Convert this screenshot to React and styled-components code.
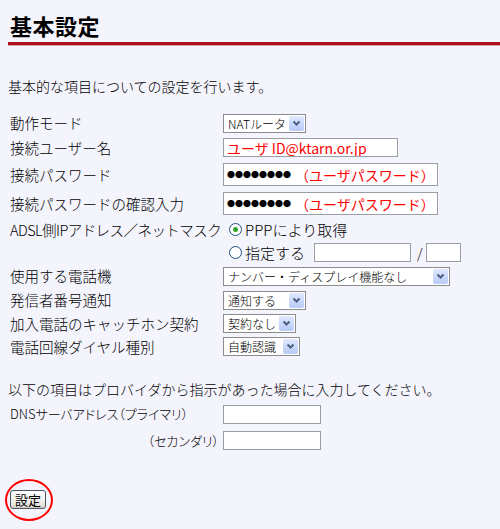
import React from "react";
import styled, { createGlobalStyle } from "styled-components";

const GlobalStyle = createGlobalStyle`
  html, body { margin: 0; padding: 0; }
  body {
    background: #f4f4fc;
    font-family: "Noto Sans CJK JP", "Noto Sans", sans-serif;
    font-weight: 300;
    color: #000;
    width: 500px;
    height: 529px;
    overflow: hidden;
  }
`;

const Page = styled.div`
  padding: 0 0 0 8px;
`;

const Title = styled.h1`
  margin: 0;
  padding: 12px 0 3px 2px;
  font-size: 22px;
  line-height: 27px;
  font-weight: bold;
  letter-spacing: 0.5px;
  border-bottom: 3px solid #a8101e;
  box-shadow: 0 1px 0 #d9a0a8;
`;

const Intro = styled.p`
  margin: 31px 0 15px 0;
  font-size: 14px;
  line-height: 20px;
`;

const Form = styled.div`
  display: flex;
  flex-direction: column;
  padding-left: 2px;
`;

const Row = styled.div`
  display: grid;
  grid-template-columns: 213px auto;
  align-items: center;
  height: ${(p) => p.$h}px;
`;

const Label = styled.div`
  font-size: ${(p) => (p.$small ? 13 : 14.5)}px;
  font-feature-settings: ${(p) => (p.$small ? '"palt"' : "normal")};
  letter-spacing: ${(p) => (p.$tight ? -0.55 : 0)}px;
  line-height: 20px;
  white-space: nowrap;
  text-align: ${(p) => (p.$right ? "right" : "left")};
  padding-right: ${(p) => (p.$right ? 4 : 0)}px;
`;

const Control = styled.div`
  display: flex;
  align-items: center;
`;

const SelectBox = styled.div`
  display: inline-flex;
  align-items: center;
  justify-content: space-between;
  box-sizing: border-box;
  width: ${(p) => p.$w}px;
  height: 19px;
  border: 1px solid #8c8c8c;
  background: #fff;
  font-size: 12px;
  font-weight: 300;
  padding-left: 4px;
  white-space: nowrap;
`;

const Arrow = styled.span`
  display: flex;
  align-items: center;
  justify-content: center;
  width: 15px;
  height: 15px;
  margin-right: 1px;
  border-radius: 2px;
  background: linear-gradient(#dfe8fe, #b7cbf7);
  box-sizing: border-box;
`;

const TextBox = styled.div`
  box-sizing: border-box;
  width: ${(p) => p.$w}px;
  height: ${(p) => p.$h}px;
  border: 1px solid #9a9ea6;
  background: #fff;
  display: flex;
  align-items: center;
  padding-left: 3px;
  color: #ff0000;
  font-size: ${(p) => p.$fs || 14}px;
  font-weight: 400;
  white-space: nowrap;
  overflow: hidden;
`;

const Dots = styled.span`
  color: #000;
  font-size: 8px;
  margin-right: 4px;
`;

const Radio = styled.span`
  display: inline-flex;
  align-items: center;
  justify-content: center;
  width: 11px;
  height: 11px;
  border: 1px solid #1c5180;
  border-radius: 50%;
  background: #fff;
  margin: 0 3px 0 6px;
  &::after {
    content: "";
    display: ${(p) => (p.$checked ? "block" : "none")};
    width: 5px;
    height: 5px;
    border-radius: 50%;
    background: #31a52c;
  }
`;

const RadioText = styled.span`
  font-size: 15px;
  line-height: 20px;
  margin-right: ${(p) => p.$mr || 0}px;
`;

const Slash = styled.span`
  font-size: 14px;
  margin: 0 3px 0 6px;
`;

const Note = styled.p`
  margin: 21px 0 2px 0;
  font-size: 14px;
  line-height: 20px;
`;

const SubmitWrap = styled.div`
  margin-top: 23px;
  position: relative;
  width: 50px;
  height: 44px;
  display: flex;
  align-items: center;
  padding-left: 2px;
`;

const Ring = styled.span`
  position: absolute;
  left: -3px;
  top: 2px;
  width: 48px;
  height: 42px;
  border: 2px solid #f00;
  border-radius: 50%;
  box-sizing: border-box;
  pointer-events: none;
`;

const Button = styled.button`
  font-family: "Noto Sans CJK JP", sans-serif;
  font-size: 13px;
  line-height: 15px;
  padding: 1px 4px;
  height: 19px;
  border: 1px solid #4a5460;
  border-radius: 3px;
  background: linear-gradient(#ffffff, #ecebe6 70%, #d6d0c5);
  color: #000;
`;

const Chevron = () => (
  <svg width="9" height="7" viewBox="0 0 9 7">
    <path d="M1.5 1.5 L4.5 4.5 L7.5 1.5" fill="none" stroke="#4d6185" strokeWidth="2" />
  </svg>
);

const Select = ({ w, children }) => (
  <SelectBox $w={w}>
    <span>{children}</span>
    <Arrow>
      <Chevron />
    </Arrow>
  </SelectBox>
);

export default function App() {
  return (
    <>
      <GlobalStyle />
      <Page>
        <Title>基本設定</Title>
        <Intro>基本的な項目についての設定を行います。</Intro>
        <Form>
          <Row $h={24}>
            <Label>動作モード</Label>
            <Control>
              <Select w={83}>NATルータ</Select>
            </Control>
          </Row>
          <Row $h={25}>
            <Label>接続ユーザー名</Label>
            <Control>
              <TextBox $w={175} $h={19} $fs={14}>ユーザ ID@ktarn.or.jp</TextBox>
            </Control>
          </Row>
          <Row $h={29}>
            <Label>接続パスワード</Label>
            <Control>
              <TextBox $w={215} $h={23}>
                <Dots>●●●●●●●●</Dots>（ユーザパスワード）
              </TextBox>
            </Control>
          </Row>
          <Row $h={29}>
            <Label>接続パスワードの確認入力</Label>
            <Control>
              <TextBox $w={215} $h={23}>
                <Dots>●●●●●●●●</Dots>（ユーザパスワード）
              </TextBox>
            </Control>
          </Row>
          <Row $h={23}>
            <Label $tight>ADSL側IPアドレス／ネットマスク</Label>
            <Control>
              <Radio $checked />
              <RadioText>PPPにより取得</RadioText>
            </Control>
          </Row>
          <Row $h={23}>
            <Label />
            <Control>
              <Radio />
              <RadioText $mr={9}>指定する</RadioText>
              <TextBox $w={97} $h={19} />
              <Slash>/</Slash>
              <TextBox $w={35} $h={19} />
            </Control>
          </Row>
          <Row $h={24}>
            <Label>使用する電話機</Label>
            <Control>
              <Select w={227}>ナンバー・ディスプレイ機能なし</Select>
            </Control>
          </Row>
          <Row $h={24}>
            <Label>発信者番号通知</Label>
            <Control>
              <Select w={83}>通知する</Select>
            </Control>
          </Row>
          <Row $h={23}>
            <Label>加入電話のキャッチホン契約</Label>
            <Control>
              <Select w={73}>契約なし</Select>
            </Control>
          </Row>
          <Row $h={23}>
            <Label>電話回線ダイヤル種別</Label>
            <Control>
              <Select w={77}>自動認識</Select>
            </Control>
          </Row>
        </Form>
        <Note>以下の項目はプロバイダから指示があった場合に入力してください。</Note>
        <Form>
          <Row $h={26}>
            <Label $small>DNSサーバアドレス（プライマリ）</Label>
            <Control>
              <TextBox $w={98} $h={19} />
            </Control>
          </Row>
          <Row $h={27}>
            <Label $small $right>（セカンダリ）</Label>
            <Control>
              <TextBox $w={98} $h={19} />
            </Control>
          </Row>
        </Form>
        <SubmitWrap>
          <Ring />
          <Button>設定</Button>
        </SubmitWrap>
      </Page>
    </>
  );
}
